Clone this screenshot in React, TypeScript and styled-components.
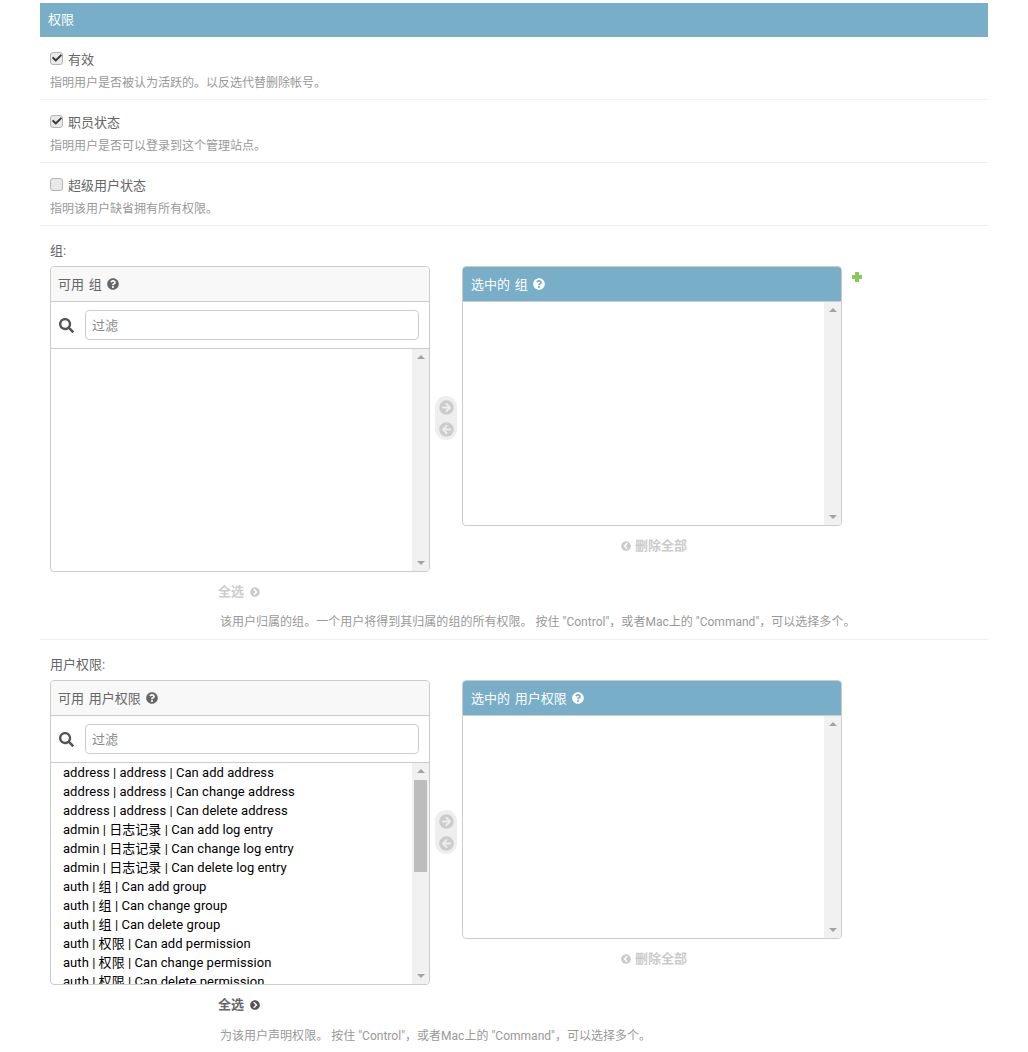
import React from 'react';
import styled, { createGlobalStyle } from 'styled-components';
import {
  FaArrowCircleLeft,
  FaArrowCircleRight,
  FaCheck,
  FaChevronCircleLeft,
  FaChevronCircleRight,
  FaQuestionCircle,
  FaSearch,
} from 'react-icons/fa';

const permissions = [
  'address | address | Can add address',
  'address | address | Can change address',
  'address | address | Can delete address',
  'admin | 日志记录 | Can add log entry',
  'admin | 日志记录 | Can change log entry',
  'admin | 日志记录 | Can delete log entry',
  'auth | 组 | Can add group',
  'auth | 组 | Can change group',
  'auth | 组 | Can delete group',
  'auth | 权限 | Can add permission',
  'auth | 权限 | Can change permission',
  'auth | 权限 | Can delete permission',
];

const flags = [
  { label: '有效', help: '指明用户是否被认为活跃的。以反选代替删除帐号。', checked: true },
  { label: '职员状态', help: '指明用户是否可以登录到这个管理站点。', checked: true },
  { label: '超级用户状态', help: '指明该用户缺省拥有所有权限。', checked: false },
];

export default function App() {
  return (
    <Page>
      <GlobalStyle />
      <Heading>权限</Heading>
      {flags.map((flag) => (
        <FlagRow key={flag.label}>
          <FlagLine>
            <CheckBox>{flag.checked && <FaCheck />}</CheckBox>
            {flag.label}
          </FlagLine>
          <FlagHelp>{flag.help}</FlagHelp>
        </FlagRow>
      ))}
      <Chooser
        label="组:"
        name="组"
        listHeight={222}
        help={'该用户归属的组。一个用户将得到其归属的组的所有权限。 按住 "Control"，或者Mac上的 "Command"，可以选择多个。'}
        showAdd
      />
      <Chooser
        label="用户权限:"
        name="用户权限"
        listHeight={221}
        items={permissions}
        help={'为该用户声明权限。 按住 "Control"，或者Mac上的 "Command"，可以选择多个。'}
      />
    </Page>
  );
}

type ChooserProps = {
  label: string;
  name: string;
  help: string;
  listHeight: number;
  items?: string[];
  showAdd?: boolean;
};

function Chooser({ label, name, help, listHeight, items = [], showAdd }: ChooserProps) {
  const hasItems = items.length > 0;
  return (
    <ChooserRow>
      <FieldLabel>{label}</FieldLabel>
      <Selector>
        <Column>
          <Box>
            <BoxTitle>
              可用 {name} <FaQuestionCircle />
            </BoxTitle>
            <FilterRow>
              <FaSearch />
              <FilterInput placeholder="过滤" />
            </FilterRow>
            <ListArea $height={listHeight}>
              <List>
                {items.map((item) => (
                  <Item key={item}>{item}</Item>
                ))}
              </List>
              <ScrollTrack>
                <ArrowUp />
                {hasItems && <Thumb />}
                <ArrowDown />
              </ScrollTrack>
            </ListArea>
          </Box>
          <ChooseAll $active={hasItems}>
            全选 <FaChevronCircleRight />
          </ChooseAll>
        </Column>
        <Arrows>
          <ArrowPill>
            <FaArrowCircleRight />
            <FaArrowCircleLeft />
          </ArrowPill>
        </Arrows>
        <Column>
          <Box>
            <BoxTitle $selected>
              选中的 {name} <FaQuestionCircle />
            </BoxTitle>
            <ListArea $height={listHeight + 1}>
              <List />
              <ScrollTrack>
                <ArrowUp />
                <ArrowDown />
              </ScrollTrack>
            </ListArea>
          </Box>
          <RemoveAll>
            <FaChevronCircleLeft /> 删除全部
          </RemoveAll>
        </Column>
        {showAdd && (
          <AddLink>
            <svg viewBox="0 0 10 10" aria-hidden="true">
              <path
                fill="currentColor"
                d="M3.5 0h3a.5.5 0 0 1 .5.5V3h2.5a.5.5 0 0 1 .5.5v3a.5.5 0 0 1-.5.5H7v2.5a.5.5 0 0 1-.5.5h-3a.5.5 0 0 1-.5-.5V7H.5A.5.5 0 0 1 0 6.5v-3A.5.5 0 0 1 .5 3H3V.5a.5.5 0 0 1 .5-.5z"
              />
            </svg>
          </AddLink>
        )}
      </Selector>
      <ChooserHelp>{help}</ChooserHelp>
    </ChooserRow>
  );
}

const GlobalStyle = createGlobalStyle`
  html, body {
    margin: 0;
    height: 1052px;
    overflow: hidden;
    background: #fff;
  }
`;

const Page = styled.div`
  height: 1052px;
  overflow: hidden;
  box-sizing: border-box;
  padding: 3px 40px 0;
  color: #666;
  font-family: Roboto, "Noto Sans CJK SC", sans-serif;
  font-size: 13px;
`;

const Heading = styled.h2`
  margin: 0;
  height: 34px;
  padding-left: 8px;
  background: #79aec8;
  color: #fff;
  font-size: 13px;
  font-weight: 400;
  line-height: 34px;
`;

const FlagRow = styled.div`
  height: 63px;
  box-sizing: border-box;
  padding: 12px 10px 0;
  border-bottom: 1px solid #eee;
`;

const FlagLine = styled.div`
  display: flex;
  align-items: center;
  gap: 5px;
  height: 18px;
  color: #666;
  font-size: 13px;
`;

const CheckBox = styled.span`
  display: flex;
  align-items: center;
  justify-content: center;
  width: 13px;
  height: 13px;
  box-sizing: border-box;
  border: 1px solid #b5b5b5;
  border-radius: 3px;
  background: #e9e9e9;
  color: #3c3c3c;

  svg {
    width: 10px;
    height: 10px;
  }
`;

const FlagHelp = styled.p`
  margin: 7px 0 0;
  color: #999;
  font-size: 12px;
  line-height: 18px;
`;

const ChooserRow = styled.div`
  height: 414px;
  box-sizing: border-box;
  padding: 16px 10px 0;
  border-bottom: 1px solid #eee;
`;

const FieldLabel = styled.div`
  height: 18px;
  margin-bottom: 6px;
  line-height: 18px;
`;

const Selector = styled.div`
  display: flex;
  align-items: flex-start;
  height: 333px;
`;

const Column = styled.div`
  width: 380px;
`;

const Box = styled.div`
  border: 1px solid #ccc;
  border-radius: 4px;
  overflow: hidden;
`;

const BoxTitle = styled.div<{ $selected?: boolean }>`
  display: flex;
  align-items: center;
  height: 32px;
  padding: 0 0 2px ${(p) => (p.$selected ? 8 : 7)}px;
  background: ${(p) => (p.$selected ? '#79aec8' : '#f8f8f8')};
  border-bottom: 1px solid #ccc;
  color: ${(p) => (p.$selected ? '#fff' : '#666')};
  font-size: 13px;
  word-spacing: 1.5px;
  white-space: pre;

  svg {
    width: 12px;
    height: 12px;
    margin: 2px 0 0 1px;
  }
`;

const FilterRow = styled.div`
  display: flex;
  align-items: center;
  gap: 11px;
  height: 46px;
  padding: 0 10px 0 8px;
  border-bottom: 1px solid #ccc;
  color: #555;

  svg {
    flex: none;
    width: 15px;
    height: 15px;
  }
`;

const FilterInput = styled.input`
  flex: 1;
  min-width: 0;
  height: 30px;
  box-sizing: border-box;
  padding: 0 6px;
  border: 1px solid #ccc;
  border-radius: 4px;
  font: inherit;
  color: #333;

  &::placeholder {
    color: #888;
  }
`;

const ListArea = styled.div<{ $height: number }>`
  display: flex;
  height: ${(p) => p.$height}px;
`;

const List = styled.div`
  flex: 1;
  min-width: 0;
  overflow: hidden;
  padding: 0 0 0 12px;
`;

const Item = styled.div`
  height: 19px;
  color: #000;
  font-size: 13px;
  letter-spacing: 0.05px;
  line-height: 19px;
  white-space: nowrap;
`;

const ScrollTrack = styled.div`
  position: relative;
  flex: none;
  width: 17px;
  background: #f1f1f1;
`;

const ArrowUp = styled.span`
  position: absolute;
  top: 6px;
  left: 5px;
  border: 4px solid transparent;
  border-top: 0;
  border-bottom: 4px solid #a3a3a3;
`;

const ArrowDown = styled.span`
  position: absolute;
  bottom: 6px;
  left: 5px;
  border: 4px solid transparent;
  border-bottom: 0;
  border-top: 4px solid #a3a3a3;
`;

const Thumb = styled.div`
  position: absolute;
  top: 17px;
  left: 2px;
  width: 13px;
  height: 92px;
  background: #bdbdbd;
`;

const ChooseAll = styled.div<{ $active?: boolean }>`
  display: flex;
  align-items: center;
  height: 18px;
  margin: 9px 0 0 168px;
  color: ${(p) => (p.$active ? '#666' : '#ccc')};
  font-size: 13px;
  font-weight: 700;
  white-space: pre;

  svg {
    width: 10px;
    height: 10px;
    margin: 3px 0 0 3px;
    color: ${(p) => (p.$active ? '#555' : '#ccc')};
  }
`;

const RemoveAll = styled.div`
  display: flex;
  align-items: center;
  justify-content: center;
  height: 18px;
  margin-top: 9px;
  padding-left: 4px;
  color: #ccc;
  font-size: 13px;
  font-weight: 700;
  white-space: pre;

  svg {
    width: 10px;
    height: 10px;
    margin: 3px 1px 0 0;
  }
`;

const Arrows = styled.div`
  display: flex;
  align-items: center;
  justify-content: center;
  width: 32px;
  height: 304px;
`;

const ArrowPill = styled.div`
  display: flex;
  flex-direction: column;
  align-items: center;
  gap: 7px;
  width: 22px;
  height: 44px;
  box-sizing: border-box;
  padding-top: 4px;
  border-radius: 11px;
  background: #eee;
  color: #ccc;

  svg {
    width: 15px;
    height: 15px;
  }
`;

const AddLink = styled.a`
  display: block;
  margin: 6px 0 0 10px;
  color: #8ac858;
  line-height: 0;

  svg {
    width: 10px;
    height: 10px;
  }
`;

const ChooserHelp = styled.p`
  margin: 14px 0 0 170px;
  color: #999;
  font-size: 12px;
  letter-spacing: 0.02px;
  line-height: 18px;
  white-space: nowrap;
`;
